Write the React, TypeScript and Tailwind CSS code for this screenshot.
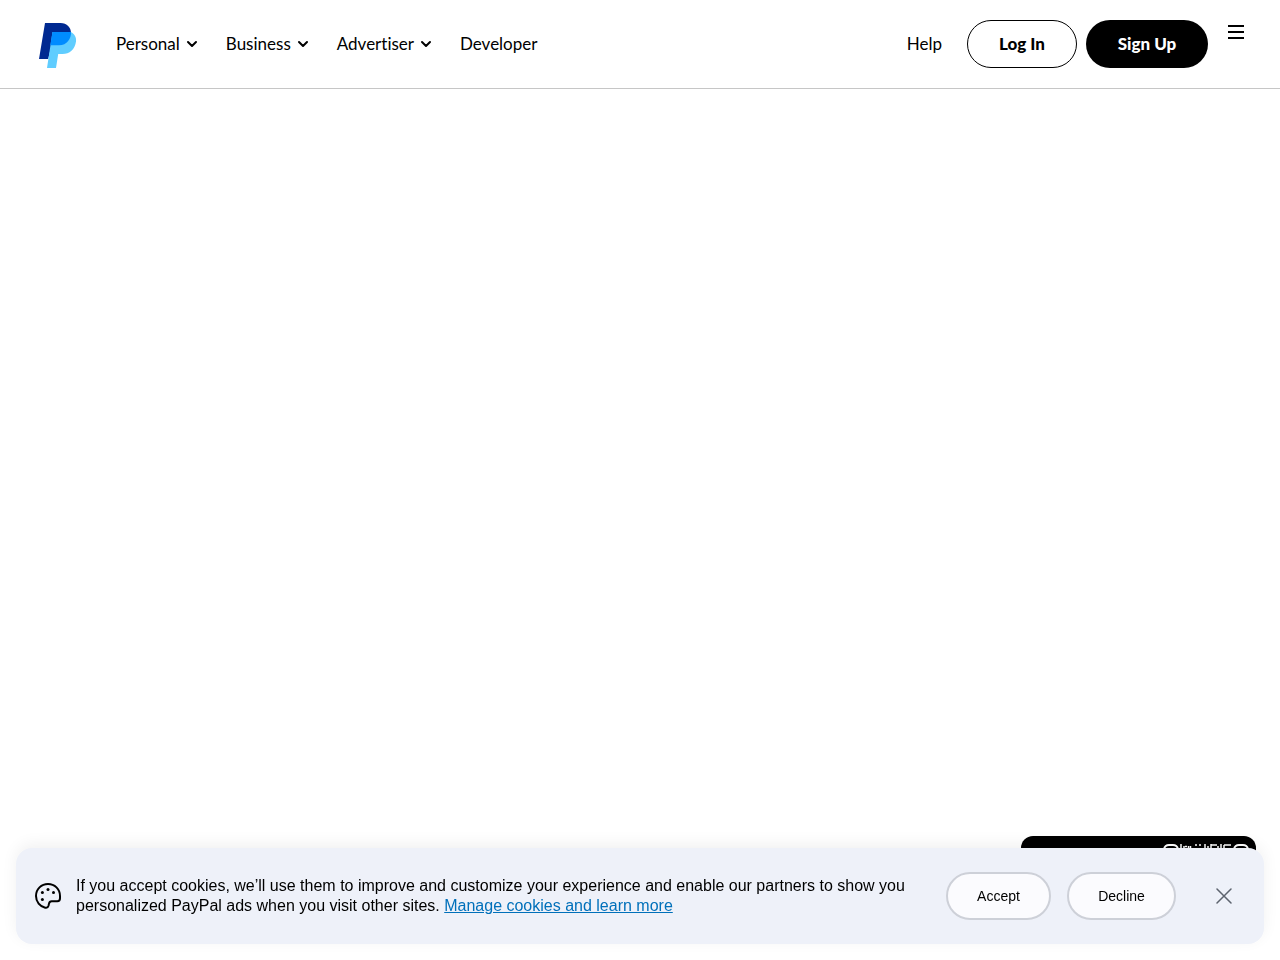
import React from 'react';
import { clsx } from 'clsx';

type NavItem = {
  label: string;
  hasMenu: boolean;
};

const navItems: NavItem[] = [
  { label: 'Personal', hasMenu: true },
  { label: 'Business', hasMenu: true },
  { label: 'Advertiser', hasMenu: true },
  { label: 'Developer', hasMenu: false },
];

function Logo() {
  return (
    <svg viewBox="0 0 38 46" className="h-[46px] w-[38px]" aria-hidden="true">
      <path d="M6 1H21.5C28 1 32 5.5 32 11C32 17 28 23.5 20 23.5H12.5L9.2 37H0Z" fill="#002991" />
      <path d="M13.5 10H31.8C35.6 11.8 37.6 15.5 37 19.5C36 27.5 30.5 32 23.5 32H19.2L17 46H8Z" fill="#60cdff" />
      <path d="M13.5 10H32C32.4 16.5 28 23.3 20 23.3H11.3Z" fill="#008cff" />
    </svg>
  );
}

function Chevron() {
  return (
    <svg viewBox="0 0 12 12" className="h-3 w-3" fill="none" stroke="currentColor" strokeWidth="2" aria-hidden="true">
      <path d="M2 4L6 8L10 4" strokeLinecap="round" strokeLinejoin="round" />
    </svg>
  );
}

function Header() {
  return (
    <header className="flex h-[89px] items-start border-b border-[#c6c6c6] pl-[39px] pr-8 pt-5 font-['Lato',sans-serif] text-[17px] text-black [font-variant-ligatures:none]">
      <a href="#home" aria-label="PayPal" className="mt-0.5 shrink-0">
        <Logo />
      </a>
      <nav className="ml-[39px] flex h-12 items-center gap-7">
        {navItems.map((item) =>
          item.hasMenu ? (
            <button key={item.label} type="button" className="flex items-center gap-1.5">
              {item.label}
              <Chevron />
            </button>
          ) : (
            <a key={item.label} href="#developer">
              {item.label}
            </a>
          )
        )}
      </nav>
      <div className="ml-auto flex h-12 items-center">
        <a href="#help" className="mr-[25px]">
          Help
        </a>
        <a
          href="#login"
          className="mr-[9px] flex h-12 w-[110px] items-center justify-center rounded-full border border-black font-black"
        >
          Log In
        </a>
        <a
          href="#signup"
          className="flex h-12 w-[122px] items-center justify-center rounded-full bg-black font-black text-white"
        >
          Sign Up
        </a>
      </div>
      <button type="button" aria-label="Menu" className="ml-4 flex h-6 w-6 items-center justify-center">
        <svg viewBox="0 0 16 14" className="h-3.5 w-4" fill="none" stroke="currentColor" strokeWidth="2" aria-hidden="true">
          <path d="M0 1H16M0 7H16M0 13H16" />
        </svg>
      </button>
    </header>
  );
}

// Video controls, mostly hidden by the cookie banner
function MediaControls() {
  return (
    <div className="absolute -top-3 right-2 flex h-12 w-[235px] justify-end rounded-xl bg-black pr-1.5 pt-2">
      <svg viewBox="0 0 88 12" className="h-3 w-[88px]" fill="none" stroke="#fff" aria-hidden="true">
        <path d="M2 5Q3 1 7 1H11Q15 1 16 5M72 5Q73 1 77 1H81Q85 1 86 5" strokeWidth="2" />
        <path
          d="M19 0V5M22 2V5M23 2.5H25M26.5 2V5M28.5 2V5M34 0V2M38 0V2M43 0V5M46 2V5M49 0V5M49 1H55M56 2V5M59 0V5M62 1V5M62 1H69"
          strokeWidth="1.5"
        />
      </svg>
    </div>
  );
}

function PaletteIcon() {
  return (
    <svg viewBox="0 0 26 26" className="h-[26px] w-[26px] shrink-0" fill="none" aria-hidden="true">
      <path
        d="M10.2 24.7C5 23.4 1 18.8 1 13C1 6 6.4 1 13 1C19.6 1 25 6 25 13V15.3C25 17.1 24.2 18.2 22.4 18.2H16.7C15 18.2 14.3 19.1 14 20.6L13.5 22.8C13 24.5 11.8 25.1 10.2 24.7Z"
        stroke="#000"
        strokeWidth="2"
        strokeLinejoin="round"
      />
      <g fill="#000">
        <circle cx="7.4" cy="9.5" r="1.5" />
        <circle cx="13" cy="6.5" r="1.5" />
        <circle cx="18.5" cy="9.5" r="1.5" />
        <circle cx="7.4" cy="16.5" r="1.5" />
      </g>
    </svg>
  );
}

function BannerButton({ label, className }: { label: string; className: string }) {
  return (
    <button
      type="button"
      className={clsx('h-12 shrink-0 rounded-full border-2 border-[#cdd0d8] bg-[#fbfbfe] text-sm text-black', className)}
    >
      {label}
    </button>
  );
}

function CookieBanner() {
  return (
    <section aria-label="Cookies" className="fixed inset-x-4 bottom-4 font-['Liberation_Sans',Arial,sans-serif]">
      <MediaControls />
      <div className="relative flex min-h-24 items-center rounded-2xl bg-[#eef1f9] pl-[19px] pr-7 shadow-[0_-4px_16px_rgba(0,0,0,0.06)]">
        <PaletteIcon />
        <p className="ml-[15px] mr-5 flex-1 text-base leading-5 text-black">
          If you accept cookies, we’ll use them to improve and customize your experience and enable our partners to show you
          personalized PayPal ads when you visit other sites.{' '}
          <a href="#cookies" className="text-[#0070ba] underline">
            Manage cookies and learn more
          </a>
        </p>
        <BannerButton label="Accept" className="mr-4 w-[105px]" />
        <BannerButton label="Decline" className="w-[109px]" />
        <button type="button" aria-label="Close" className="ml-9 flex h-6 w-6 shrink-0 items-center justify-center">
          <svg viewBox="0 0 16 16" className="h-4 w-4" fill="none" stroke="#5d636e" strokeWidth="1.5" aria-hidden="true">
            <path d="M1 1L15 15M15 1L1 15" strokeLinecap="round" />
          </svg>
        </button>
      </div>
    </section>
  );
}

export default function App() {
  return (
    <div className="flex min-h-screen flex-col bg-white">
      <Header />
      <main className="flex-1" />
      <CookieBanner />
    </div>
  );
}
